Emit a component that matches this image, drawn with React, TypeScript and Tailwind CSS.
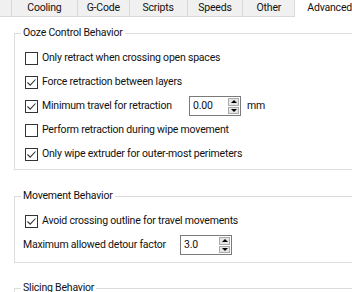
import React from "react";

const tabs = [
  { label: "", w: "w-[12px]" },
  { label: "Cooling", w: "w-[66px]" },
  { label: "G-Code", w: "w-[52px]" },
  { label: "Scripts", w: "w-[58px]" },
  { label: "Speeds", w: "w-[56px]" },
  { label: "Other", w: "w-[52px]" },
];

const CheckBox = ({ checked }: { checked: boolean }) => (
  <span className="flex h-[13px] w-[13px] shrink-0 items-center justify-center border border-[#333333] bg-white">
    {checked && (
      <svg width="11" height="11" viewBox="0 0 11 11" fill="none">
        <path d="M1.5 5.5 L4.2 8.2 L9.5 2.5" stroke="#333333" strokeWidth="1.1" />
      </svg>
    )}
  </span>
);

const CheckRow = ({ checked, label }: { checked: boolean; label: string }) => (
  <div className="flex h-[24px] items-center gap-[4px] pl-[10px]">
    <CheckBox checked={checked} />
    <span className="whitespace-nowrap">{label}</span>
  </div>
);

const SpinBox = ({ value }: { value: string }) => (
  <div className="flex h-[20px] w-[52px] shrink-0 items-center border border-[#7a7a7a] bg-white">
    <span className="flex-1 pl-[3px] leading-none">{value}</span>
    <div className="mr-[1px] flex h-[16px] w-[11px] flex-col gap-[1px]">
      <div className="flex flex-1 items-center justify-center border border-[#acacac] bg-[#e5e5e5]">
        <span className="h-0 w-0 border-x-[3px] border-b-[3px] border-x-transparent border-b-black" />
      </div>
      <div className="flex flex-1 items-center justify-center border border-[#acacac] bg-[#e5e5e5]">
        <span className="h-0 w-0 border-x-[3px] border-t-[3px] border-x-transparent border-t-black" />
      </div>
    </div>
  </div>
);

const Group = ({
  title,
  className,
  children,
}: {
  title: string;
  className?: string;
  children?: React.ReactNode;
}) => (
  <fieldset className={`ml-[14px] w-[360px] border border-[#dcdcdc] ${className ?? ""}`}>
    <legend className="ml-[6px] px-[2px] leading-[16px]">{title}</legend>
    {children}
  </fieldset>
);

export default function App() {
  return (
    <div
      className="h-[292px] w-[352px] overflow-hidden bg-white text-[10.5px] tracking-[-0.2px] text-[#111111]"
      style={{ fontFamily: "Roboto, 'Liberation Sans', sans-serif" }}
    >
      <div className="flex h-[17px]">
        {tabs.map((t, i) => (
          <div
            key={i}
            className={`${t.w} flex h-[17px] items-center justify-center border-b border-r border-[#d9d9d9] bg-[#f0f0f0] leading-none`}
          >
            {t.label}
          </div>
        ))}
        <div className="flex h-[17px] flex-1 items-center whitespace-nowrap bg-white pl-[12px] leading-none">
          Advanced
        </div>
      </div>

      <Group title="Ooze Control Behavior" className="mt-[8px] pb-[3px] pt-[5px]">
        <CheckRow checked={false} label="Only retract when crossing open spaces" />
        <CheckRow checked={true} label="Force retraction between layers" />
        <div className="flex h-[24px] items-center pl-[10px]">
          <CheckBox checked={true} />
          <span className="ml-[4px] w-[147px] whitespace-nowrap">Minimum travel for retraction</span>
          <SpinBox value="0.00" />
          <span className="ml-[6px]">mm</span>
        </div>
        <CheckRow checked={false} label="Perform retraction during wipe movement" />
        <CheckRow checked={true} label="Only wipe extruder for outer-most perimeters" />
      </Group>

      <Group title="Movement Behavior" className="mt-[18px] pb-[5px] pt-[5px]">
        <CheckRow checked={true} label="Avoid crossing outline for travel movements" />
        <div className="flex h-[24px] items-center pl-[8px]">
          <span className="w-[157px] whitespace-nowrap">Maximum allowed detour factor</span>
          <SpinBox value="3.0" />
        </div>
      </Group>

      <Group title="Slicing Behavior" className="mt-[17px] h-[40px]" />
    </div>
  );
}
